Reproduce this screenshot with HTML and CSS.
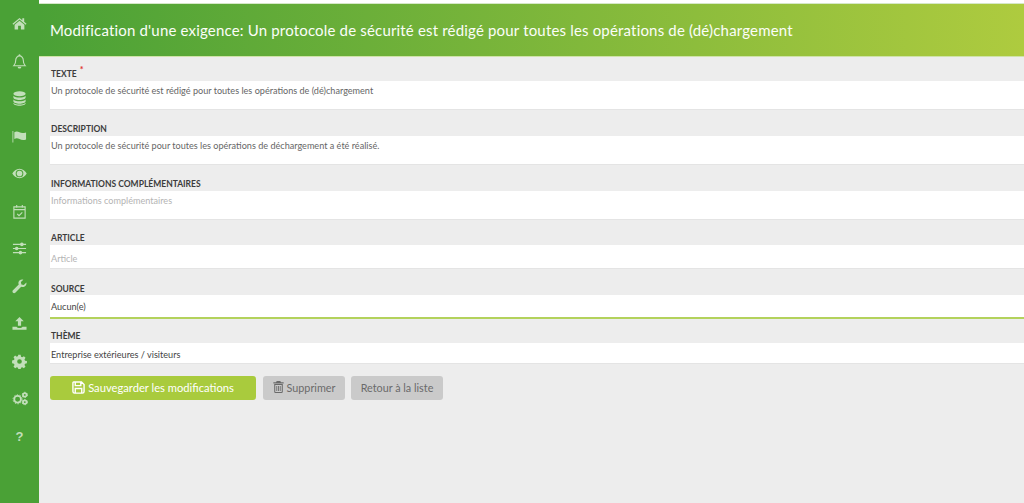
FILE: index.html
```html
<!DOCTYPE html>
<html lang="fr">
<head>
<meta charset="utf-8">
<title>Modification d'une exigence</title>
<link rel="stylesheet" href="styles.css">
</head>
<body>
<div class="app">
  <nav class="sidebar">
    <svg class="ico" viewBox="0 0 16 14"><path d="M8 1 .5 7.200l.9 1L8 2.800l6.600 5.400.9-1L13 5.100V1.500h-2v2L8 1ZM8 4 2.800 8.300V13.500H6.500V9.500H9.500V13.500H13.200V8.300L8 4Z"/></svg>
    <svg class="ico" viewBox="0 0 14 16"><path class="ln" d="M1 12.500c1.500-1.500 2-3 2-6 0-2.500 2-4.500 4-4.500s4 2 4 4.500c0 3 .5 4.500 2 6H1Z"/><path d="M7 0.300a1 1 0 0 1 1 1V2H6v-.7a1 1 0 0 1 1-1ZM5 13.500h4a2 2 0 0 1-4 0Z"/></svg>
    <svg class="ico" viewBox="0 0 14 16"><ellipse cx="7" cy="3" rx="6.500" ry="2.700"/><path d="M.5 5v2c0 1.500 3 2.700 6.500 2.700s6.500-1.200 6.500-2.700V5C12 6.500 9.500 7 7 7S2 6.500.5 5ZM.5 9v2c0 1.500 3 2.700 6.500 2.700s6.500-1.200 6.500-2.700V9c-1.500 1.500-4 2-6.500 2S2 10.500.5 9Z"/><path d="M.5 12.500V13c0 1.500 3 2.700 6.500 2.700s6.500-1.200 6.500-2.700v-.5c-1.500 1.500-4 2-6.500 2s-5-.5-6.500-2Z"/></svg>
    <svg class="ico" viewBox="0 0 16 14"><path d="M.5 1h.9v12.500H.5zM2.500 2.500c2-1.200 3.500-1 5.500 0s3.500 1 7 .2v7.500c-3 1-5 .5-7-.5s-3.500-1.200-5.500 0V2.500Z"/></svg>
    <svg class="ico" viewBox="0 0 16 12"><path fill-rule="evenodd" d="M8 1C4.500 1 1.800 3.300.3 6 1.800 8.700 4.500 11 8 11s6.200-2.300 7.700-5C14.200 3.300 11.500 1 8 1Zm0 .9a4.100 4.100 0 1 1 0 8.200 4.100 4.100 0 0 1 0-8.200Z"/><circle cx="8" cy="6" r="3"/></svg>
    <svg class="ico" viewBox="0 0 14 16"><path class="ln" d="M1 3h12v12H1zM1 6h12M4 1v3M10 1v3M4.500 10.500l2 2 3.500-3.500"/></svg>
    <svg class="ico" viewBox="0 0 16 14"><path d="M1 2h14v1.200H1zM1 6.400h14v1.200H1zM1 10.800h14V12H1z"/><circle cx="10.500" cy="2.600" r="1.900"/><circle cx="5" cy="7" r="1.900"/><circle cx="9" cy="11.400" r="1.900"/></svg>
    <svg class="ico" viewBox="0 0 16 16"><path d="M15.300 3.800 12.600 6.400 10 5.800 9.500 3.300 12.100.700C10 .1 8 .8 7.200 2.700c-.5 1.100-.4 2.200 0 3.200L1 12.100c-.7.700-.7 1.800 0 2.500.7.700 1.800.7 2.500 0l6.300-6.300c1 .4 2.200.5 3.200 0 1.900-.8 2.800-2.700 2.300-4.500Z"/></svg>
    <svg class="ico" viewBox="0 0 16 14"><path d="M8 0 3.500 4.700h2.800V9.500h3.400V4.700h2.800L8 0ZM.5 10.500h4.300c.4 1 1.800 1.300 3.200 1.300s2.800-.3 3.200-1.300h4.300v3.200H.5v-3.200Z"/></svg>
    <svg class="ico" viewBox="0 0 16 16"><path fill-rule="evenodd" d="M6.800.8h2.400l.4 2 1.300.6 1.800-1.100 1.700 1.700-1.100 1.800.6 1.300 2 .4v2.400l-2 .4-.6 1.300 1.100 1.800-1.700 1.700-1.800-1.100-1.300.6-.4 2H6.800l-.4-2-1.300-.6-1.800 1.100-1.700-1.700 1.100-1.800-.6-1.300-2-.4V6.900l2-.4.6-1.300-1.100-1.800 1.700-1.700 1.800 1.100 1.300-.6.400-1.900ZM8 5.500a2.500 2.500 0 1 0 0 5 2.500 2.500 0 0 0 0-5Z"/></svg>
    <svg class="ico ico-wide" viewBox="0 0 20 16"><g class="ln2"><circle cx="7" cy="9" r="4.200"/><circle cx="16" cy="3.500" r="2.300"/><circle cx="16" cy="12.500" r="2.300"/></g><g class="teeth"><circle cx="7" cy="9" r="5.700"/><circle cx="16" cy="3.500" r="3.300"/><circle cx="16" cy="12.500" r="3.300"/></g></svg>
    <span class="help">?</span>
  </nav>
  <div class="page">
    <div class="topline"></div>
    <h1 class="banner">Modification d'une exigence: Un protocole de sécurité est rédigé pour toutes les opérations de (dé)chargement</h1>
    <main class="content">
      <form class="form">
        <div class="field field-area">
          <label class="label">TEXTE <sup class="req">*</sup></label>
          <div class="input area">Un protocole de sécurité est rédigé pour toutes les opérations de (dé)chargement</div>
        </div>
        <div class="field field-area">
          <label class="label">DESCRIPTION</label>
          <div class="input area">Un protocole de sécurité pour toutes les opérations de déchargement a été réalisé.</div>
        </div>
        <div class="field field-area field-area-last">
          <label class="label">INFORMATIONS COMPLÉMENTAIRES</label>
          <div class="input area placeholder">Informations complémentaires</div>
        </div>
        <div class="field field-article">
          <label class="label">ARTICLE</label>
          <div class="input line placeholder">Article</div>
        </div>
        <div class="field field-source">
          <label class="label label-source">SOURCE</label>
          <div class="input line select active">Aucun(e)</div>
        </div>
        <div class="field field-theme">
          <label class="label">THÈME</label>
          <div class="input line select theme">Entreprise extérieures / visiteurs</div>
        </div>
        <div class="actions">
          <button type="button" class="btn btn-primary">
            <svg class="btn-ico btn-ico-save" viewBox="0 0 14 14"><path class="save" d="M1.800 1h8.400L13 3.800v7.400a1.800 1.800 0 0 1-1.800 1.800H2.800A1.800 1.800 0 0 1 1 11.200V1.800A.8.800 0 0 1 1.800 1ZM3.500 1v4h6V1M3.500 13V8h7v5"/></svg>
            <span class="btn-text">Sauvegarder les modifications</span></button>
          <button type="button" class="btn btn-grey">
            <svg class="btn-ico" viewBox="0 0 12 14"><path fill-rule="evenodd" d="M4 0h4l1 1.500h3v1.300H0V1.500h3L4 0ZM1 3.500h10V12.500A1.500 1.500 0 0 1 9.500 14h-7A1.500 1.500 0 0 1 1 12.500v-9Zm1.200 1.200v8h7.600v-8H2.200ZM3.500 5.700h1v6h-1zM5.500 5.700h1v6h-1zM7.500 5.700h1v6h-1z"/></svg>
            <span class="btn-text">Supprimer</span></button>
          <button type="button" class="btn btn-grey btn-back"><span class="btn-text">Retour à la liste</span></button>
        </div>
      </form>
    </main>
  </div>
</div>
</body>
</html>
```
FILE: styles.css
```css
* { box-sizing: border-box; }
html, body { margin: 0; height: 100%; overflow: hidden; }
body { font-family: Lato, "Open Sans", sans-serif; color: #444; background: #ededed; }
.app { display: flex; height: 503px; width: 1024px; }
.sidebar {
  width: 39px; flex: none; background: #4aa136;
  display: flex; flex-direction: column; align-items: center;
  padding-top: 16px; gap: 22.500px;
}
.ico { width: 15px; height: 15px; fill: #c2dfba; flex: none; }
.ico-wide { width: 16px; }
.ln { fill: none; stroke: #c2dfba; stroke-width: 1.200; }
.ln2 { fill: none; stroke: #c2dfba; stroke-width: 2.200; }
.teeth { fill: none; stroke: #c2dfba; stroke-width: 1.200; stroke-dasharray: 1.600 2; }
.help { font: bold 13px/15px "Liberation Sans", sans-serif; color: #c2dfba; height: 15px; }
.page { flex: 1; min-width: 0; display: flex; flex-direction: column; }
.topline { height: 3px; background: #fff; flex: none; }
.banner {
  margin: 0; height: 54px; flex: none; padding: 1px 0 0 11px;
  border-top: 1px solid #d6e8c8; border-bottom: 1px solid #cfe3a8;
  background: linear-gradient(90deg, #4aa136 0%, #aecb3f 100%);
  color: #fbfdf8; font-weight: 400; font-size: 15px; line-height: 50px; letter-spacing: .175px; white-space: nowrap;
}
.content { flex: 1; padding: 9px 0 0 11px; background: #ededed; }
.form { display: flex; flex-direction: column; }
.field { display: flex; flex-direction: column; }
.label { font-size: 8.500px; font-weight: 700; color: #3c3c3c; line-height: 17px; height: 15px; padding-left: 1px; }
.label-source { line-height: 19px; }
.req { color: #e0322c; font-size: 9px; line-height: 0; vertical-align: 4px; margin-left: 1px; }
.input { background: #fff; font-size: 9.100px; padding-left: 1px; color: #666; border-bottom: 1px solid #e4e4e4; }
.area { height: 29px; line-height: 20px; }
.field-area { margin-bottom: 11px; }
.field-area-last { margin-bottom: 10px; }
.field-article { margin-bottom: 11px; }
.field-article .line { height: 24px; line-height: 28px; }
.field-source { margin-bottom: 9px; }
.field-source .line { height: 24px; line-height: 23px; }
.field-theme { margin-bottom: 12px; }
.field-theme .line { height: 21px; line-height: 24px; }
.placeholder { color: #b4b4b4; }
.select { color: #444; }
.input.active { border-bottom: 2px solid #b3d25c; }
.actions { display: flex; gap: 6px; }
.btn {
  height: 24px; border: 0; border-radius: 3px; font-family: inherit; font-size: 10.800px;
  display: inline-flex; align-items: center; justify-content: center; gap: 3px; padding: 0;
}
.btn-text { position: relative; top: -1px; }
.btn-primary { width: 206px; background: #a9cb3d; color: #fff; font-weight: 400; font-size: 11.200px; gap: 3px; margin-right: 1px; }
.btn-grey { background: #cacaca; color: #6a6a6a; width: 82px; }
.btn-back { width: 92px; }
.btn-ico { width: 11px; height: 12px; fill: currentColor; position: relative; top: -1px; }
.btn-ico-save { width: 13px; height: 13px; }
.save { fill: none; stroke: currentColor; stroke-width: 1.500; }
```
